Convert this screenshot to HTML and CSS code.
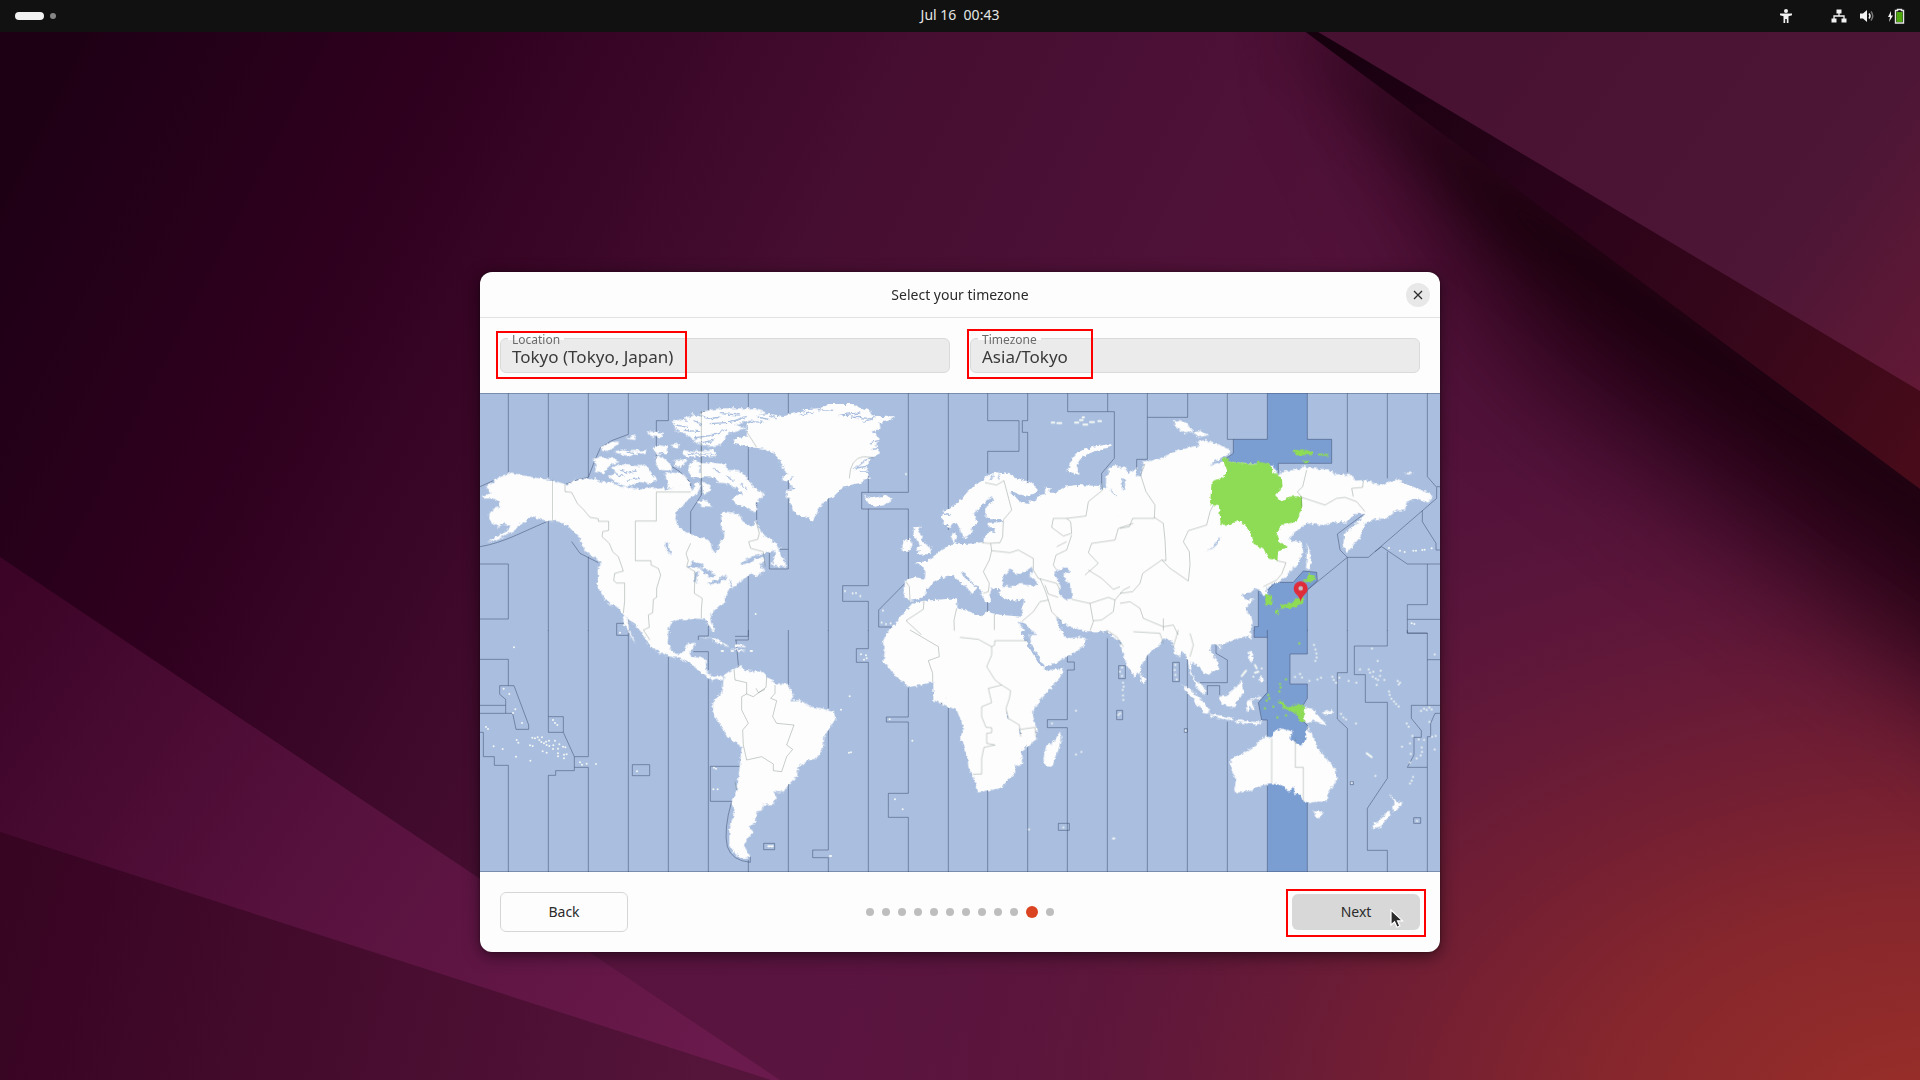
FILE: index.html
```html
<!DOCTYPE html>
<html lang="en">
<head>
<meta charset="utf-8">
<title>Select your timezone</title>
<link rel="stylesheet" href="styles.css">
</head>
<body>
<svg class="wallpaper" viewBox="0 0 1920 1080" preserveAspectRatio="none" aria-hidden="true">
  <defs>
    <linearGradient id="base" gradientUnits="userSpaceOnUse" x1="0" y1="200" x2="1100" y2="760">
      <stop offset="0" stop-color="#1e0015"/><stop offset=".28" stop-color="#30001f"/><stop offset=".6" stop-color="#460e31"/><stop offset="1" stop-color="#52123a"/>
    </linearGradient>
    <radialGradient id="glow" gradientUnits="userSpaceOnUse" cx="1930" cy="1120" r="1150" gradientTransform="translate(1930 1120) scale(1 .66) translate(-1930 -1120)">
      <stop offset="0" stop-color="#9a2f28"/><stop offset=".3" stop-color="#85262d"/><stop offset=".65" stop-color="#661a38" stop-opacity=".8"/><stop offset="1" stop-color="#5a1540" stop-opacity="0"/>
    </radialGradient>
    <linearGradient id="facet" gradientUnits="userSpaceOnUse" x1="0" y1="600" x2="700" y2="1080">
      <stop offset="0" stop-color="#3c0427"/><stop offset=".5" stop-color="#58123e"/><stop offset="1" stop-color="#6a1a4c"/>
    </linearGradient>
    <linearGradient id="low" gradientUnits="userSpaceOnUse" x1="0" y1="900" x2="700" y2="1080">
      <stop offset="0" stop-color="#370422"/><stop offset="1" stop-color="#55143a"/>
    </linearGradient>
    <linearGradient id="lower" gradientUnits="userSpaceOnUse" x1="400" y1="0" x2="1300" y2="0">
      <stop offset="0" stop-color="#5c1541"/><stop offset=".5" stop-color="#5c1541"/><stop offset="1" stop-color="#5c1541" stop-opacity="0"/>
    </linearGradient>
    <linearGradient id="fold" gradientUnits="userSpaceOnUse" x1="1320" y1="30" x2="1920" y2="440">
      <stop offset="0" stop-color="#16000e"/><stop offset=".4" stop-color="#2a031a"/><stop offset=".75" stop-color="#38071a"/><stop offset="1" stop-color="#470b1a"/>
    </linearGradient>
    <linearGradient id="sheet" gradientUnits="userSpaceOnUse" x1="1400" y1="30" x2="1920" y2="400">
      <stop offset="0" stop-color="#471131"/><stop offset=".7" stop-color="#4e1636"/><stop offset="1" stop-color="#621935"/>
    </linearGradient>
    <filter id="soft" x="-50%" y="-50%" width="200%" height="200%" color-interpolation-filters="sRGB"><feGaussianBlur stdDeviation="60"/></filter>
    <filter id="softer" x="-50%" y="-50%" width="200%" height="200%" color-interpolation-filters="sRGB"><feGaussianBlur stdDeviation="28"/></filter>
  </defs>
  <path fill="url(#base)" d="M0 0H1920V1080H0z"/>
  <path fill="url(#lower)" d="M480 879L780 1080H1920V879z" opacity=".8"/>
  <path fill="url(#glow)" d="M0 0H1920V1080H0z"/>
  <path fill="#1f0010" filter="url(#soft)" opacity=".9" d="M1330 0L2100 560V800L1520 350z"/>
  <path fill="#150009" filter="url(#softer)" opacity=".8" d="M1270 0L2060 560V620L1500 240z"/>
  <path fill="url(#fold)" d="M1303 30L1920 489V385L1315 30z"/>
  <path fill="url(#sheet)" d="M1315 30L1920 391V0H1300z"/>
  <path fill="url(#facet)" d="M0 557L780 1080H0z"/>
  <path fill="url(#low)" d="M0 832L771 1080H0z"/>
</svg>

<header class="topbar">
  <div class="spaces"><span class="space-current"></span><span class="space-other"></span></div>
  <time class="clock">Jul 16&nbsp; 00:43</time>
  <div class="tray">
    <svg class="access" width="14" height="16" viewBox="0 0 14 16"><circle cx="7" cy="3" r="2" fill="#f2f2f2"/><path d="M1 5.500h12v1.800l-3.500.9V15h-1.700v-4H6.200v4H4.500V8.200L1 7.300z" fill="#f2f2f2"/></svg>
    <svg width="16" height="16" viewBox="0 0 16 16"><path d="M5.500 1.500h5v4h-5zM.5 10.500h5v4h-5zM10.500 10.500h5v4h-5z" fill="#f2f2f2"/><path d="M8 5v3M3 11V8h10v3" fill="none" stroke="#f2f2f2" stroke-width="1.300"/></svg>
    <svg width="16" height="16" viewBox="0 0 16 16"><path d="M1 5.500h3L8 2v12l-4-3.500H1z" fill="#f2f2f2"/><path d="M10 5.500q2 2.500 0 5" fill="none" stroke="#f2f2f2" stroke-width="1.500"/><path d="M12 3.500q3.500 4.500 0 9" fill="none" stroke="#777" stroke-width="1.500"/></svg>
    <svg width="18" height="16" viewBox="0 0 18 16"><path d="M4 3L1 9h2l-1 5 4-6.500H4z" fill="#f2f2f2"/><path d="M8.500 2.500h2v-1h4v1h2V15h-8z" fill="#111" stroke="#e8e8e8" stroke-width="1.400"/><path d="M9.500 4h6v10h-6z" fill="#4fa80e"/></svg>
  </div>
</header>

<main class="stage">
  <section class="dialog" aria-labelledby="title">
    <header class="titlebar">
      <h1 id="title" class="title">Select your timezone</h1>
      <button class="close" type="button" aria-label="Close"><svg width="10" height="10" viewBox="0 0 10 10"><path d="M1 1l8 8M9 1L1 9" stroke="#2b2b2b" stroke-width="1.300"/></svg></button>
    </header>

    <form class="fields">
      <div class="field">
        <label class="label" for="location">Location</label>
        <input class="input" id="location" type="text" value="Tokyo (Tokyo, Japan)">
        <span class="mark mark-location"></span>
      </div>
      <div class="field">
        <label class="label" for="timezone">Timezone</label>
        <input class="input" id="timezone" type="text" value="Asia/Tokyo">
        <span class="mark mark-timezone"></span>
      </div>
    </form>

    <svg class="map" viewBox="0 0 2880 1437" role="img" aria-label="World timezone map">
      <defs>
        <filter id="coast" x="0" y="0" width="2880" height="1437" filterUnits="userSpaceOnUse">
          <feTurbulence type="fractalNoise" baseFrequency=".09" numOctaves="2" seed="4"/>
          <feDisplacementMap in="SourceGraphic" scale="14" xChannelSelector="R" yChannelSelector="G"/>
        </filter>
      </defs>

      <!-- selected zone, UTC+9 -->
      <g class="zone">
        <path transform="translate(1920 -9)" d="M442 0V148H340V190L320 205V240H475V220H635V148H562V0zM415 600L440 605L465 577H520L550 543L590 547L592 572L562 600V725H403V710H415z"/>
        <path transform="translate(1440 711)" d="M882-5V22H922V187L895 218L905 270H922V727H1042V285L1030 275V225L1042 205V162H990V72H1042V-5z"/>
      </g>

      <!-- sea boundaries of the zones -->
      <g class="sea-lines">
        <path d="M0 1H2880M0 1436H2880"/>
        <g transform="translate(0 -9)">
          <path d="M85 9V250M205 9V262M325 9V262M445 9V133L395 152L362 172L345 210L325 262L290 270L255 284M565 9V92H529V220H560L600 245L632 278V306H529M685 9V65H664V315L632 365V460M805 9V300M925 9V478M925 478H900M925 478V537H868V480M805 540V739H765M685 685V738H655V750M0 522H85V687H0M205 393V722M325 500V722M445 685V722M410 700H445M410 700V736H445M0 470Q50 462 110 435T205 393M0 290L40 272M275 455L300 490L355 518M830 335V400"/>
        </g>
        <g transform="translate(960 -9)">
          <path d="M85 320V722M205 255V307M205 357V587H128V634H205V722M325 9V307H185V357H325V567M445 9V420M563 9V92H657V184H563V250M683 9V92H667V127H683V285M683 530V586H715M563 620V665M803 9V65H943V205L905 250V280M923 9V65M315 580L236 660V711H275M803 710V722"/>
        </g>
        <g transform="translate(1920 -9)">
          <path d="M82 9V208H50V240M82 82H203V9M322 9V148H442V9M562 9V148H635V220H475V250M682 9V250M802 9V265M922 9V260L950 292V325L745 502H682L660 480L652 432L735 370M682 502L562 600M682 502V722M960 290H950M785 470L862 522H960M802 485V722M907 362V395L948 460V480H960M922 522V644H862V730H922M960 688H862M340 148V190L318 205M415 600V710H403V722M562 600V722M415 600L440 605L465 577H520L550 543L590 547L592 572L562 600M765 485L785 470"/>
        </g>
        <g transform="translate(0 711)">
          <path d="M85 88V167M0 88H85M59 167H102L146 285V298H108L98 250H0M59 167V193L77 208V250M0 226H77M0 307H10V380H43V406H85V726M205 0V307H250V260H205M250 307L283 380H325V0M283 380V422H227V436H205V726M283 412H325V726M445 0V726M565 80V726M457 404H509V437H457zM685 120V65H640M685 145V726M765 30H805V0M768 30L776 115M805 690V726M925 0V165M925 460V726M1045 0V235M1045 300V660H998V683H1045V726M1165 0V56H1129V97H1165V726M1285 172V261H1219V276H1285V490H1225V562H1285V726M1405 220V726M1408 172V213H1385V221H1405M780 409H691V514H755M755 514Q730 600 742 650Q755 692 811 697V680M851 640H884V659H851z"/>
        </g>
        <g transform="translate(1440 711)">
          <path d="M83 480V726M203 340V726M322 75V96H343V120H322V269H262V293H322V726M442 5V726M562 75V726M682 60V726M802 275V726M922 0V187L895 218L905 270H922V726M1042 0V72H990V162H1042V205L1030 225M1030 275L1042 285V726M1162 0V128H1132V267L1162 295V726M1282 0V48H1183V134H1216V217H1282V445L1222 535V661H1282V726M1342 0V9H1402V226M1402 89H1440M1440 226H1354V265L1384 302V322H1362V375L1342 412H1402V726M1402 320H1412V280L1425 250H1440M1402 320V412M882 0V22H922M476 107H496V146H476zM638 97H658V155H638zM470 241H488V269H470zM673 296H682V307H673zM295 580H328V601H295zM1171 455H1180V464H1171zM1361 563H1382V580H1361zM720 158H802V90L768 70V40M742 195V167H779V195"/>
        </g>
      </g>

      <!-- land -->
      <g class="land" filter="url(#coast)">
        <g transform="translate(0 -9)">
          <path d="M5 318L35 308L18 290L40 278L52 264L80 254L95 248L125 255L160 262L215 270L250 281L265 284L280 272L300 268L318 265L332 272L345 262L355 275L400 278L420 290L450 292L480 299L500 292L520 295L545 292L555 299L590 295L605 280L598 262L612 258L622 280L640 300L645 282L655 275L662 290L650 312L628 325L610 345L590 362L586 385L592 405L605 420L645 438L682 448L692 458L695 475L705 488L715 480L718 455L732 445L733 430L722 415L725 395L722 372L735 365L760 368L778 376L790 392L800 404L818 410L826 392L845 428L860 442L895 463L895 478L860 488L835 495L815 500L795 510L780 525L810 518L825 506L845 503L852 512L838 528L858 538L845 550L825 560L815 548L805 555L790 568L775 578L768 590L745 600L735 620L735 635L715 650L700 665L692 680L695 695L703 715L698 723L684 700L675 688L640 685L625 690L590 690L572 700L565 720L563 760L572 775L585 790L600 792L615 780L622 762L645 758L640 772L628 790L635 800L675 806L678 820L680 845L695 860L712 855L730 862L728 872L708 866L695 872L678 856L660 845L630 820L600 806L565 798L530 782L502 762L500 748L480 722L455 695L440 685L428 672L418 655L385 640L370 620L358 600L352 580L354 555L352 535L365 522L350 508L325 490L308 470L300 458L300 445L280 425L262 405L245 400L230 393L205 392L180 388L160 380L145 382L138 396L120 400L105 420L85 430L60 445L20 458L50 440L75 428L92 408L72 400L55 411L42 400L30 395L24 375L42 356L60 350L58 335L40 325L10 326z"/>
          <path d="M430 675L444 690L448 720L468 762L460 752L445 724L430 700z"/>
          <path d="M340 206L365 202L405 205L418 216L395 222L380 236L372 250L345 242L350 225zM385 262L410 246L396 233L415 222L450 226L480 228L500 222L512 250L532 268L510 280L480 276L440 290L418 282zM362 172L395 156L418 155L408 170L385 182L368 184zM400 185L430 178L450 183L480 182L500 180L495 190L460 192L450 200L420 192zM440 145L470 134L462 150zM500 124L550 128L545 142L515 140zM515 175L535 165L562 170L560 190L535 195zM575 95L600 88L625 95L612 82L640 78L630 72L660 75L665 65L720 55L820 55L858 68L800 92L765 105L800 112L770 125L745 130L720 165L690 170L650 160L630 140L610 128L590 122zM572 165L600 160L595 175L578 172zM606 178L640 186L704 180L706 198L620 200L608 192zM582 210L620 208L605 232L585 228zM525 200L545 200L575 225L575 242L545 240L530 228zM555 250L580 245L605 248L630 275L620 292L600 285L590 300L565 295L560 270z"/>
          <path d="M625 250L635 215L650 210L665 220L700 218L735 224L742 240L775 240L800 262L812 280L830 298L855 312L843 325L830 335L828 368L810 360L795 350L770 345L755 328L765 316L790 312L770 295L740 280L715 278L700 262L670 262L640 262zM665 275L692 285L688 305L670 315zM650 335L680 330L698 350L665 348zM660 110L720 140L690 150z"/>
          <path d="M888 470L898 472L902 498L916 515L918 530L895 530L875 525L882 505zM660 744Q690 740 720 752L748 768L720 762L690 746zM765 762L790 765L795 772L768 770z"/>
        </g>
        <g transform="translate(960 -9)">
          <path d="M-160 95L-145 78L-90 72L-50 78L-10 68L20 62L5 58L60 55L85 42L160 42L185 55L210 62L215 75L240 82L285 78L262 94L238 98L242 115L225 128L240 150L228 165L240 190L212 205L200 235L208 265L180 278L130 290L100 320L85 325L65 345L55 360L40 392L15 382L0 380L-20 362L-32 330L-42 318L-38 300L-25 290L-35 272L-55 268L-36 250L-55 235L-60 210L-80 190L-110 176L-150 172L-195 162L-200 145L-160 140z"/>
          <path d="M192 318L215 325L260 316L275 330L255 345L225 350L205 340zM342 412L362 410L355 425L368 438L365 450L378 460L395 478L390 492L345 495L360 485L347 478L362 468L350 450L340 435zM310 455L328 446L338 460L330 480L305 485zM798 240L815 232L810 215L835 185L880 170L930 162L935 170L880 185L845 200L830 225L838 255zM735 290L752 292L748 308L735 310z"/>
          <path d="M315 570L345 562L375 566L376 545L370 532L345 518L380 514L410 492L430 475L455 465L462 458L452 438L465 425L468 440L462 458L475 463L530 460L550 455L555 435L572 425L582 430L585 412L565 412L566 398L610 396L600 387L570 388L556 378L560 350L582 332L575 318L555 335L540 352L522 370L525 385L535 398L520 410L512 430L492 446L485 430L475 408L462 400L450 412L435 405L425 385L430 362L450 356L475 335L500 308L525 285L550 270L565 255L590 247L630 253L650 265L690 277L712 295L712 305L690 318L665 316L640 305L630 308L645 320L665 338L690 342L685 330L708 335L710 320L740 308L765 308L790 290L830 285L900 288L905 300L918 290L918 265L930 235L945 222L962 240L968 295L955 315L938 308L930 290L935 310L960 325L1000 300V722H815L800 708L785 695L768 680L800 708L840 722H268L275 715L300 680L335 642L370 632L400 630L470 625L472 655L510 665L545 680L560 665L600 674L665 680L668 650L673 628L640 632L610 625L595 612L600 598L575 595L568 618L575 640L558 635L545 610L535 590L515 575L500 555L483 545L490 560L510 575L530 595L517 612L500 592L475 572L460 558L435 562L410 570L400 575L380 598L370 620L345 630L330 632L313 622z"/>
        </g>
        <g transform="translate(1920 -9)">
          <path d="M-10 300L15 300L15 270L0 265L0 230L12 228L25 250L50 235L48 260L62 262L70 218L120 205L175 180L240 165L232 155L255 150L300 165L330 178L328 192L300 205L265 226L310 215L460 225L475 262L482 245L540 238L550 228L575 235L625 238L645 252L695 255L705 272L735 270L780 285L830 268L860 283L905 300L938 315L925 338L890 325L860 335L855 362L830 362L800 385L760 388L735 400L722 440L700 465L680 490L668 465L675 430L710 400L735 372L700 372L680 398L640 396L610 405L560 400L520 430L508 450L545 458L550 490L530 525L500 558L475 577L455 582L438 600L445 612L430 618L420 600L405 594L392 608L365 612L375 628L402 628L385 645L375 655L398 690L395 715L385 740H0V722z"/>
          <path d="M160 95L185 88L200 100L220 125L195 130L165 108zM220 130L240 122L266 135L235 142zM562 460L570 490L576 510L570 535L558 538zM850 250L878 247L870 254zM385 738L398 728L390 750z"/>
        </g>
        <g transform="translate(0 711)">
          <path d="M735 130L760 118L780 108L800 122L850 126L868 145L885 160L922 162L942 195L930 212L960 210L990 230L1025 235L1062 246L1066 268L1045 300L1033 320L1030 350L1012 385L980 392L955 410L952 435L925 465L908 488L880 485L890 503L880 522L848 525L845 542L825 545L830 562L822 582L805 590L820 605L800 630L793 648L812 682L785 685L760 668L748 640L748 600L762 550L755 515L770 480L778 420L785 350L742 322L715 275L697 242L700 215L728 182L730 150zM750 55L795 60L780 66z"/>
          <path d="M1228-5L1208 35L1215 60L1210 95L1240 130L1285 172L1320 165L1357 157L1385 155L1402 170L1422 178L1418 215L1440 245H1560V-5z"/>
        </g>
        <g transform="translate(1440 711)">
          <path d="M-10 240L12 295L0 322L22 380L25 410L48 465L55 487L80 482L120 475L165 430L168 405L187 402L183 365L228 328L230 300L216 245L245 205L300 142L312 114L257 122L248 105L225 70L200 30L190-5H-80V210z"/>
          <path d="M205-5H315L325 14L350 10L380 30L370 48L350 64L325 75L290 98L252 108L240 85L215 50zM300 305L305 325L290 375L277 408L256 405L250 385L258 350L280 338zM360-5L375 3L440 5L460 22L480 32L488 70L505 115L525 140L540 128L545 105L562 75L595 48L610 25L635 32L645 70L658 82L668 65L684 90L690 130L715 180L735 195L735 172L705 150L693 125L695 95L715 110L728 125L745 135L775 115L776 95L750 65L755 42L775 45L820 32L850 20L872-5zM540 130L558 145L552 160L542 155zM775 45L787 50L778 60zM864 12L875 5L868 28z"/>
          <path d="M665 165L690 178L725 210L745 235L748 252L730 245L705 215L685 190zM750 252L780 256L820 264L818 272L785 266L752 260zM778 200L800 198L845 152L848 175L852 190L835 205L825 232L800 228L780 215zM866 62L880 68L875 100L868 90zM895 150L905 135L912 150L905 160zM862 212L900 200L905 204L872 212L885 240L875 238L868 225L862 248L858 235zM825 270L890 276L915 272L890 284L825 276zM1030 230L1060 238L1075 258L1102 285L1085 280L1060 272L1042 280L1030 272zM1085 248L1115 240L1120 246L1095 254z"/>
          <path d="M812 385L850 370L888 345L900 328L918 320L935 322L945 302L970 296L998 305L990 328L1025 345L1035 330L1042 290L1062 328L1072 355L1100 385L1128 420L1130 450L1105 490L1098 515L1070 515L1042 520L1028 508L1015 490L1002 492L1003 470L988 485L965 465L930 460L895 470L870 482L840 488L822 485L828 450L812 412zM1060 543L1088 545L1082 562L1072 566zM1288 490L1300 502L1310 515L1328 518L1315 535L1300 545L1296 532L1305 518zM1285 542L1294 550L1262 590L1240 595L1238 585L1262 568z"/>
        </g>
        <g transform="translate(960 -9)" class="sea">
          <path d="M605 587L610 560L632 535L650 552L672 548L695 530L700 545L688 558L718 582L700 588L660 582L632 590zM762 545L800 532L810 545L790 553L800 575L812 580L816 626L795 628L778 612L782 590zM640 678L652 694L672 700L710 735H688L660 705zM768 680L800 708L870 727L925 730L930 745L850 740L800 745L775 705z"/>
        </g>
        <path class="sea" transform="translate(0 -9)" d="M620 532L642 514L668 522L672 533L650 534zM645 545L655 543L650 582L643 575zM658 535L692 540L705 558L690 564L675 550zM680 580L710 570L738 556L738 566L710 582zM553 458L563 460L575 495L568 490L560 478z"/>
        <path class="sea" transform="translate(1920 -9)" d="M255 485Q280 478 300 440Q300 470 255 485z"/>
        <path class="sea" transform="translate(1440 711)" d="M182 2L206 5V25L225 65L250 105L240 108L212 60L195 30zM300-3L330 8L322 20zM138 240L148 268L142 262zM176 290L186 315H180z"/>
        <!-- fjords and sounds -->
        <path class="fjords" d="M585 95L625 104M640 62L690 78L720 72M612 112L660 116M640 135L690 128L740 110M660 150L700 142M690 92L750 88L800 70M720 62L780 66M640 82L665 96M770 100L820 84M420 232L450 240L470 232M440 262L480 256M400 240L430 250M700 225L720 240M740 250L760 262M780 272L800 290M660 216V240M535 180L556 182M440 178L462 182M620 182L700 184M805 85L850 88M830 72L870 80M870 66L890 78M960 66L1000 58M1010 50L1060 52M1080 66L1140 60M1110 72L1170 76M1150 88L1200 66M1160 42L1190 50M1200 108L1180 120M1205 140L1170 150M1200 165L1175 170M1198 190L1165 196L1120 230M1190 215L1130 225M1180 240L1140 236M900 210L910 222M930 262L940 250M925 290L945 285M1540 245L1530 262M1560 242L1555 258M1390 360L1410 366M750 560L765 640M750 630L775 645"/>
      </g>

      <!-- selected land -->
      <g class="chosen" filter="url(#coast)">
        <path transform="translate(1920 -9)" d="M308 205L328 206L322 214L410 222L415 215L450 222L458 245L485 262L488 290L465 315L485 335L510 320L545 318L547 350L530 395L485 405L470 432L475 455L500 467L498 475L475 480L472 512L445 505L430 475L402 462L395 435L375 405L355 390L330 402L302 405L297 350L270 342L275 275L310 262L320 245zM520 182L550 178L580 185L578 195L530 196zM595 190L628 192L620 198L598 196zM545 212L568 213L566 220L550 218zM435 612L455 615L458 640L437 648zM565 548L588 566L572 578L550 575L562 565zM462 665L475 655L480 660L472 676zM480 645L510 640L530 625L550 620L550 640L510 655L482 656z"/>
        <path transform="translate(1440 711)" d="M952 212L975 215L972 225L985 232L1010 220L1032 228V278L1018 270L1005 250L985 240L970 235z"/>
      </g>
      <g class="chosen-dots" transform="translate(1440 711)">
        <path d="M1018 40h0M978 148h0M960 162h0M962 172h0M958 184h0M925 195h0M928 205h0M915 235h0M940 230h0M952 262h0M978 256h0M920 212h0"/>
      </g>

      <!-- land borders of the zones -->
      <g class="borders">
        <path transform="translate(0 -9)" d="M217 270V392M255 283V305L275 307L292 340L310 358L330 382L355 386V394H386V421L368 425L366 440L388 460L398 485L415 500L430 543L404 550L401 572L410 579H434V633L430 670M529 306V393H466V512H513V525L535 535L542 555L530 595V622L520 628L518 668L505 675L508 712L490 720L510 750M632 460L618 490L625 512L620 530L645 545L643 610L667 625L664 660L664 685M529 306H632M664 65V315M830 400L838 430L833 448L806 455L812 475L850 485L856 530M800 125L830 172"/>
        <path transform="translate(960 -9)" d="M148 265Q150 205 190 200L222 203M555 278L590 285L612 272L618 295L635 360L610 390L608 440L600 458L565 460L545 458M572 460L575 482L630 488L655 480L700 505L700 540M575 482L568 510L550 545L568 580L565 605L550 610M700 540L715 565L770 580L780 600M735 585L745 612L775 622M720 565L735 600L745 630L720 635L700 665L665 695M745 630L755 665L785 695M815 628L870 640L880 695L870 722M870 640L925 622L945 630L940 665L905 690L880 692M945 630L970 600L990 590M865 540L905 565L940 598L960 590M855 555L895 520L865 488L875 460L945 450L955 415L1000 400M905 278L908 300L865 335L858 378L800 385L760 385L755 412L790 438L815 430L812 395L800 385M815 435L800 480L768 495L760 525L770 540M770 470L800 455M372 632L370 658L318 692L365 735M470 655L462 690L463 722M583 672V720M330 632L328 590L318 575"/>
        <path transform="translate(1920 -9)" d="M75 222L62 255L78 305L105 345L103 385L38 385L28 410L0 415M103 382L130 400L135 450L138 512L125 510L68 550L60 580L38 605L0 610M125 510L150 535L165 545L205 573L210 525L208 485L190 455L205 422L260 405L270 365L280 345M470 512L498 518L485 552L470 570L430 590M560 240L548 290L532 305L545 322L615 345L650 325L675 322L710 335L735 365M730 272L728 292L695 295L700 320M0 640L30 635L60 655L70 685L130 710L160 705L175 735M130 685V722M545 322V350"/>
        <path transform="translate(0 711)" d="M1290 0L1375 50L1378 80L1345 92L1358 130V157M762 118L765 150L800 158V192L820 200L858 172L860 140M828 175L835 188L855 178M800 192L785 200V240L805 280L788 300L790 345L800 390L845 380L880 402V422L905 425L920 380L938 358L920 345L942 285L890 280L878 260L890 212L872 205L885 190V165M765 455L770 480"/>
        <path transform="translate(1440 711)" d="M0 22L55 28L95 50V75L80 110L105 150L125 165L152 182L148 205L138 235L145 265L178 285L182 320M125 165L85 175L95 218L65 230V260L78 292L95 293V308L80 310V340L105 345L72 352L65 385V432L38 433M104 32H203M182 298L225 292L228 320M95 50L104 45V32M935 325V460M1006 325V412H1030V512M440 0L470 20L490 50M520 5L600 10L610 40M655 0L640 50M690 10L700 45L690 80"/>
      </g>

      <!-- small islands -->
      <g class="isles">
        <path transform="translate(960 -9)" d="M135 603h0M158 610h0M168 609h0M181 618h0M249 662h0M245 698h0M258 702h0M272 700h0M755 98h8M772 99h12M825 98h10M840 90h8M850 104h12M870 96h12M895 93h8M848 82h4M318 252h0"/>
        <path transform="translate(0 711)" d="M102 52h0M71 176h0M88 192h0M106 238h0M99 249h0M126 279h0M18 291h0M24 297h0M41 349h0M68 357h0M110 330h0M115 338h0M108 380h0M151 392h0M150 346h0M158 348h0M157 323h0M165 325h0M173 322h0M178 330h0M186 322h0M184 336h0M192 340h0M198 335h0M200 345h0M207 332h0M208 348h0M188 364h0M200 368h0M225 332h0M220 346h0M219 357h0M238 343h0M234 356h0M234 370h0M234 379h0M249 350h0M256 352h0M252 374h0M260 373h0M252 385h0M219 270h0M225 279h0M232 285h0M300 397h0M306 404h0M320 401h0M348 402h0M471 424h0M702 413h0M708 416h0M700 478h0M713 478h0M725 63h4M755 63h4M812 63h4M1109 199h0M1083 239h0M1107 368h0M1113 367h0M1143 73h0M1158 76h0M1160 85h0M1152 89h0M1297 332h0M1229 268h0M1245 508h0M1268 538h0M1398 205h0M865 649h4M874 649h4M1050 678h3M420 8h0M700 3h0M827-48h0"/>
        <path transform="translate(1920 -9)" d="M807 474h0M840 482h0M854 486h0M880 482h0M888 482h0M907 480h0M914 479h0M935 475h0M875 700h0M883 702h0"/>
        <path transform="translate(1440 711)" d="M348 242h0M276 280h0M348 373h0M364 366h0M207 598h0M310 592h0M459 625h4M486 112h0M480 125h0M486 138h0M489 158h0M491 170h0M488 180h0M489 196h0M490 210h0M475 255h0M480 250h0M646 105h0M644 120h0M646 135h0M650 148h0M677 302h0M1062 45h0M1066 58h0M1069 70h0M1070 82h0M1066 93h0M1005 141h0M1020 132h0M1026 142h0M1048 153h0M1072 148h0M1083 143h0M1117 140h0M1121 150h0M1128 158h0M1138 143h0M1166 153h0M1189 158h0M1200 118h0M1236 55h0M1253 93h0M1226 118h0M1230 128h0M1240 125h0M1238 140h0M1247 145h0M1250 165h0M1254 150h0M1262 122h0M1260 138h0M1273 150h0M1313 153h0M1320 158h0M1316 163h0M1287 184h0M1289 195h0M1294 206h0M1302 214h0M1308 222h0M1316 229h0M1383 243h0M1392 236h0M1400 240h0M1408 232h0M1415 238h0M1340 280h0M1346 290h0M1357 318h0M1376 328h0M1392 330h0M1326 350h0M1350 340h0M1352 372h0M1370 385h0M1385 352h0M1386 366h0M1382 376h0M1350 397h0M1424 358h0M1427 318h0M1416 320h0M1424 73h0M1246 438h0M1359 441h0M1355 452h0M1350 460h0M1175 459h0M1371 573h0M1143 252h0M1150 262h0M1158 268h0M1188 280h0M1408 276h0M1220 370L1235 381M885 105L890 115M895 125L885 128M905 115h0M858 122L845 138M880 140h0"/>
      </g>

      <!-- location pin -->
      <g transform="translate(1920 -9)">
        <path fill="#df2c38" d="M542 635C538 614 521 613 521 595A21 21 0 0 1 563 595C563 613 546 614 542 635z"/>
        <circle cx="542" cy="595" r="7" fill="#c5bec6"/>
      </g>
    </svg>

    <footer class="actions">
      <button class="button back" type="button">Back</button>
      <div class="dots" aria-label="Step 11 of 12">
        <i class="dot"></i><i class="dot"></i><i class="dot"></i><i class="dot"></i><i class="dot"></i><i class="dot"></i><i class="dot"></i><i class="dot"></i><i class="dot"></i><i class="dot"></i><i class="dot dot-on"></i><i class="dot"></i>
      </div>
      <div class="next-wrap">
        <button class="button next" type="button">Next</button>
        <span class="mark mark-next"></span>
        <svg class="pointer" width="14" height="20" viewBox="0 0 14 20"><path d="M1 1V16L4.600 12.800L7 18.300L9.800 17L7.500 11.800H12.500z" fill="#2b2b2b" stroke="#fff" stroke-width="1.200"/></svg>
      </div>
    </footer>
  </section>
</main>
</body>
</html>
```
FILE: styles.css
```css
* { box-sizing: border-box; }
body {
  margin: 0;
  min-height: 100vh;
  display: flex;
  flex-direction: column;
  background: #460e31;
  color: #2b2b2b;
  font: 14px/20px "Noto Sans", sans-serif;
}
button, input { font: inherit; color: inherit; margin: 0; }

.wallpaper {
  position: fixed;
  inset: 0;
  z-index: -1;
  width: 100%;
  height: 100%;
}

.topbar {
  display: grid;
  grid-template-columns: 1fr auto 1fr;
  align-items: center;
  height: 32px;
  padding: 0 15px;
  background: #111;
  color: #e6e6e6;
}
.spaces { display: flex; align-items: center; gap: 6px; }
.space-current { width: 29px; height: 8px; border-radius: 4px; background: #f2f2f2; }
.space-other { width: 6px; height: 6px; border-radius: 50%; background: #858585; }
.clock { padding-bottom: 2px; }
.tray { display: flex; justify-content: flex-end; align-items: center; gap: 12px; }
.access { margin-right: 26px; }

.stage {
  flex: 1;
  display: flex;
  justify-content: center;
  align-items: flex-start;
  padding: 240px 0 40px;
}
.dialog {
  width: 50%;
  min-width: 640px;
  background: #fdfdfd;
  border-radius: 12px;
  box-shadow: 0 4px 16px rgba(0, 0, 0, .5), 0 0 3px rgba(0, 0, 0, .4);
}

.titlebar {
  display: grid;
  grid-template-columns: 1fr auto 1fr;
  align-items: center;
  height: 46px;
  padding: 0 10px;
  border-bottom: 1px solid #e2e2e2;
}
.title { grid-column: 2; margin: 0; font-size: 14px; font-weight: 400; }
.close {
  justify-self: end;
  display: flex;
  align-items: center;
  justify-content: center;
  width: 24px;
  height: 24px;
  padding: 0;
  border: 0;
  border-radius: 50%;
  background: #e8e8e8;
}

.fields {
  display: grid;
  grid-template-columns: 1fr 1fr;
  gap: 20px;
  padding: 20px;
}
.field { position: relative; }
.label {
  position: absolute;
  left: 8px;
  top: -6px;
  z-index: 1;
  padding: 0 4px;
  color: #6b6b6b;
  font-size: 12px;
  line-height: 16px;
}
/* hides the field's top border behind the label */
.label::before {
  content: "";
  position: absolute;
  inset: 5px 0 auto;
  z-index: -1;
  height: 3px;
  background: #fdfdfd;
}
.input {
  display: block;
  width: 100%;
  height: 35px;
  padding: 2px 11px 0;
  border: 1px solid #dadada;
  border-radius: 6px;
  background: #ebebeb;
  color: #3a3a3a;
  font-size: 17px;
}

.mark { position: absolute; z-index: 2; border: 2px solid #f00; pointer-events: none; }
.mark-location { left: -4px; top: -7px; width: 191px; height: 48px; }
.mark-timezone { left: -3px; top: -9px; width: 126px; height: 50px; }
.mark-next { inset: -5px -6px -7px; }

.map { display: block; width: 100%; height: auto; background: #aabfdf; }
.zone { fill: #7b9ed2; }
.sea-lines { fill: none; stroke: #3b4a6d; stroke-opacity: .5; stroke-width: 3; }
.land { fill: #fdfdfd; }
.land .sea { fill: #aabfdf; }
.fjords { fill: none; stroke: #aabfdf; stroke-width: 4; stroke-linejoin: round; }
.chosen { fill: #8edb56; }
.chosen-dots { fill: none; stroke: #8edb56; stroke-width: 7; stroke-linecap: round; }
.borders { fill: none; stroke: #5d6e64; stroke-opacity: .5; stroke-width: 2; stroke-linejoin: round; }
.isles { fill: none; stroke: #f4f8f4; stroke-width: 6; stroke-linecap: round; }

.actions {
  display: grid;
  grid-template-columns: 1fr auto 1fr;
  align-items: center;
  height: 80px;
  padding: 0 20px;
}
.button { width: 128px; border-radius: 6px; padding: 0; }
.back { height: 40px; border: 1px solid #d6d6d6; background: #fdfdfd; }
.next { display: block; height: 36px; border: 0; background: #d8d8d8; }
.dots { display: flex; align-items: center; gap: 8px; }
.dot { width: 8px; height: 8px; border-radius: 50%; background: #bebebe; }
.dot-on { width: 12px; height: 12px; background: #da4421; }
.next-wrap { position: relative; justify-self: end; }
.pointer { position: absolute; right: 16px; top: 15px; }
```
